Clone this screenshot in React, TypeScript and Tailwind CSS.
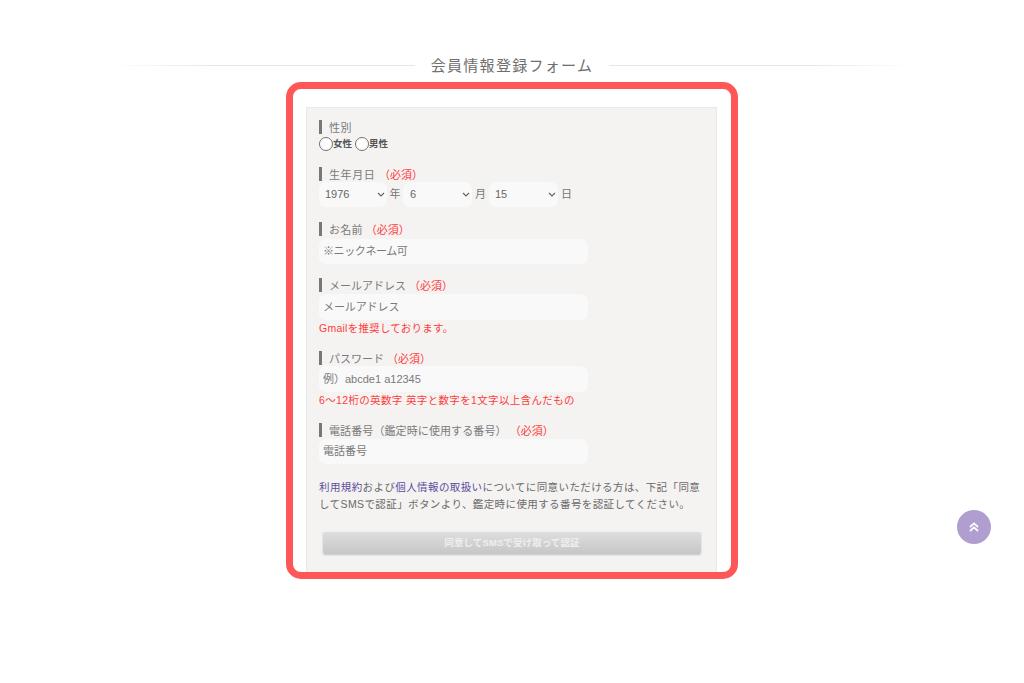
const font = { fontFamily: '"Liberation Sans", "Noto Sans CJK JP", sans-serif' };

function Label({ text, required = false, mt, track = "tracking-[0.6px]" }: { text: string; required?: boolean; mt: string; track?: string }) {
  return (
    <div className={`flex items-center h-[14px] ${mt}`}>
      <span className="w-[3px] h-[14px] bg-[#777777] mr-[7px] shrink-0" />
      <span className={`text-[11px] text-[#7a7a7a] leading-[14px] pt-[2px] whitespace-pre ${track}`}>{text}</span>
      {required && <span className="text-[11px] text-[#ff3b3b] leading-[14px] pt-[2px] whitespace-pre">（必須）</span>}
    </div>
  );
}

function Field({ text, mt, h = "h-[25px]", track = "tracking-[0px]" }: { text: string; mt: string; h?: string; track?: string }) {
  return (
    <div className={`w-[269px] ${h} ${mt} bg-[#f9f9f9] rounded-[7px] pl-[4px] flex items-center text-[11px] text-[#7a7a7a] whitespace-pre ${track}`}>
      {text}
    </div>
  );
}

function Sel({ value, w, pl }: { value: string; w: string; pl: string }) {
  return (
    <div className={`${w} h-[25px] ${pl} pr-[2px] bg-[#f9f9f9] rounded-[7px] flex items-center justify-between text-[11px] text-[#666666]`}>
      <span>{value}</span>
      <svg width="8" height="5" viewBox="0 0 8 5" fill="none" stroke="#666666" strokeWidth="1.2">
        <path d="M1 1l3 3 3-3" />
      </svg>
    </div>
  );
}

function Radio({ text }: { text: string }) {
  return (
    <span className="flex items-center">
      <span className="w-[14px] h-[14px] rounded-full border border-[#707070] bg-white shrink-0" />
      <span className="text-[9.5px] text-[#555555] font-bold leading-[14px]">{text}</span>
    </span>
  );
}

export default function App() {
  return (
    <div className="w-[1024px] h-[683px] bg-white overflow-hidden relative" style={font}>
      <div className="flex items-center justify-center pt-[55px] h-[82px] pb-[7px]">
        <div className="w-[305px] h-px bg-gradient-to-r from-white via-[#e6e6e6] via-[35%] to-[#e6e6e6]" />
        <div className="text-[15px] text-[#6e6e6e] tracking-[1.3px] leading-[20px] pt-[2px] px-[16px] whitespace-nowrap">会員情報登録フォーム</div>
        <div className="w-[305px] h-px bg-gradient-to-l from-white via-[#e6e6e6] via-[35%] to-[#e6e6e6]" />
      </div>

      <div className="w-[452px] h-[497px] ml-[286px] border-[7px] border-[#ff5757] rounded-[15px] overflow-hidden pt-[18px] pl-[13px] pr-[14px]">
        <div className="w-[411px] h-[480px] bg-[#f4f3f2] border border-[#e9e9e9] pl-[12px] pt-[12px]">
          <Label text="性別" mt="mt-0" />
          <div className="flex items-center gap-[3px] mt-[3px]">
            <Radio text="女性" />
            <Radio text="男性" />
          </div>

          <Label text="生年月日 " required mt="mt-[16px]" />
          <div className="flex items-center mt-[1px] text-[11px] text-[#777777]">
            <Sel value="1976" w="w-[68px]" pl="pl-[6px]" />
            <span className="w-[16px] text-center">年</span>
            <Sel value="6" w="w-[69px]" pl="pl-[7px]" />
            <span className="w-[17px] text-center">月</span>
            <Sel value="15" w="w-[69px]" pl="pl-[6px]" />
            <span className="w-[17px] text-center">日</span>
          </div>

          <Label text="お名前 " required mt="mt-[15px]" track="tracking-[0.2px]" />
          <Field text="※ニックネーム可" mt="mt-[3px]" track="tracking-[-0.4px]" />

          <Label text="メールアドレス " required mt="mt-[14px]" track="tracking-[0px]" />
          <Field text="メールアドレス" mt="mt-[2px]" h="h-[26px]" track="tracking-[-0.1px]" />
          <div className="text-[10.5px] text-[#ff3b3b] leading-[14px] mt-[1px] tracking-[0.25px]">Gmailを推奨しております。</div>

          <Label text="パスワード " required mt="mt-[16px]" track="tracking-[0px]" />
          <Field text="例）abcde1 a12345" mt="mt-[1px]" h="h-[26px]" />
          <div className="text-[10.5px] text-[#ff3b3b] leading-[14px] mt-[1px] tracking-[0.35px]">6〜12桁の英数字 英字と数字を1文字以上含んだもの</div>

          <Label text="電話番号（鑑定時に使用する番号） " required mt="mt-[16px]" track="tracking-[0.1px]" />
          <Field text="電話番号" mt="mt-[2px]" />

          <p className="w-[386px] text-[10.5px] leading-[17px] text-[#6a6a6a] mt-[15px] tracking-[0.4px]">
            <span className="text-[#5f4b9c]">利用規約</span>および<span className="text-[#5f4b9c]">個人情報の取扱い</span>についてに同意いただける方は、下記「同意してSMSで認証」ボタンより、鑑定時に使用する番号を認証してください。
          </p>

          <div className="w-[378px] h-[22px] ml-[4px] mt-[19px] rounded-[2px] bg-gradient-to-b from-[#dedede] to-[#c6c6c6] shadow-[0_1px_2px_rgba(0,0,0,0.2)] flex items-center justify-center text-[9.5px] font-bold text-[#efefef] tracking-[0.1px]">
            同意してSMSで受け取って認証
          </div>
        </div>
      </div>

      <div className="absolute left-[957px] top-[510px] w-[34px] h-[34px] rounded-full bg-[#b09ed0] flex items-center justify-center">
        <svg width="12" height="12" viewBox="0 0 12 12" fill="none" stroke="#ffffff" strokeWidth="1.7">
          <path d="M2 6l4-3.6L10 6M2 10l4-3.6L10 10" />
        </svg>
      </div>
    </div>
  );
}
